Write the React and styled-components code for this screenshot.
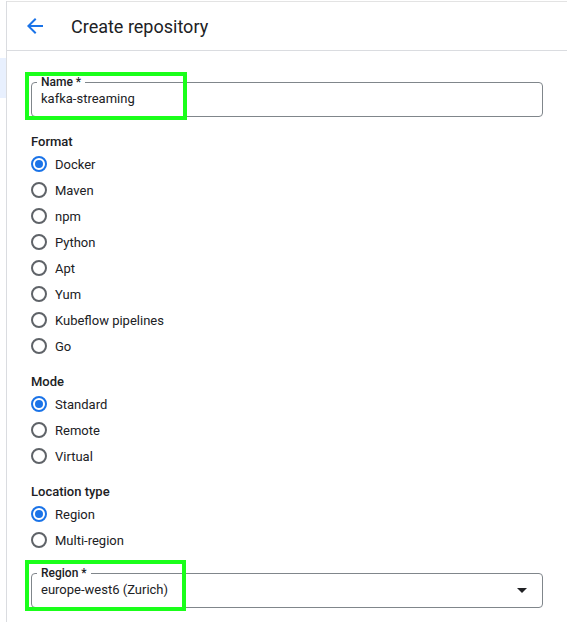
import React from "react";
import styled, { createGlobalStyle } from "styled-components";
import { MdArrowBack, MdArrowDropDown } from "react-icons/md";

const GlobalStyle = createGlobalStyle`
  html, body {
    margin: 0;
    padding: 0;
    background: #fff;
  }
  body {
    font-family: Roboto, "Liberation Sans", Arial, sans-serif;
    color: #202124;
    -webkit-font-smoothing: antialiased;
  }
`;

const sections = [
  {
    title: "Format",
    options: ["Docker", "Maven", "npm", "Python", "Apt", "Yum", "Kubeflow pipelines", "Go"],
    selected: "Docker",
  },
  {
    title: "Mode",
    options: ["Standard", "Remote", "Virtual"],
    selected: "Standard",
  },
  {
    title: "Location type",
    options: ["Region", "Multi-region"],
    selected: "Region",
  },
];

export default function App() {
  return (
    <>
      <GlobalStyle />
      <Page>
        <Sidebar>
          <SideActive />
        </Sidebar>
        <Main>
          <Header>
            <BackButton aria-label="Back">
              <MdArrowBack size={24} />
            </BackButton>
            <Title>Create repository</Title>
          </Header>

          <Content>
            <FieldWrap>
              <Field>
                <Legend>Name *</Legend>
                <Value>kafka-streaming</Value>
              </Field>
              <Highlight $top={-4} $width={162} $height={48} />
            </FieldWrap>

            {sections.map((s, i) => (
              <Section key={s.title} $first={i === 0}>
                <SectionTitle>{s.title}</SectionTitle>
                {s.options.map((opt) => (
                  <RadioRow key={opt}>
                    <Radio $checked={opt === s.selected} />
                    <RadioLabel>{opt}</RadioLabel>
                  </RadioRow>
                ))}
              </Section>
            ))}

            <FieldWrap $gap={14}>
              <Field>
                <Legend>Region *</Legend>
                <SelectRow>
                  <Value>europe-west6 (Zurich)</Value>
                  <Caret>
                    <MdArrowDropDown size={24} />
                  </Caret>
                </SelectRow>
              </Field>
              <Highlight $top={-7} $width={161} $height={51} />
            </FieldWrap>
          </Content>
        </Main>
      </Page>
    </>
  );
}

const Page = styled.div`
  display: flex;
  min-height: 622px;
  padding-top: 1px;
  box-sizing: border-box;
`;

const Sidebar = styled.aside`
  width: 6px;
  flex: none;
  border-right: 1px solid #dadce0;
`;

const SideActive = styled.div`
  margin-top: 57px;
  height: 40px;
  background: #e8f0fe;
`;

const Main = styled.main`
  flex: 1;
  display: flex;
  flex-direction: column;
`;

const Header = styled.header`
  height: 48px;
  display: flex;
  align-items: center;
  border-top: 1px solid #e3e3e3;
  border-bottom: 1px solid #dadce0;
  padding-left: 16px;
`;

const BackButton = styled.button`
  width: 24px;
  height: 24px;
  padding: 0;
  border: 0;
  background: none;
  color: #1a73e8;
  display: flex;
  align-items: center;
  justify-content: center;
  cursor: pointer;
`;

const Title = styled.h1`
  margin: 0 0 0 24px;
  font-size: 18px;
  font-weight: 400;
  color: #202124;
  letter-spacing: 0;
`;

const Content = styled.div`
  padding: 25px 24px 0 24px;
  display: flex;
  flex-direction: column;
`;

const FieldWrap = styled.div`
  position: relative;
  margin-top: ${(p) => p.$gap || 0}px;
`;

const Field = styled.fieldset`
  margin: 0;
  padding: 1px 8px 7px 5px;
  border: 1px solid #80868b;
  border-radius: 4px;
  min-width: 0;
`;

const Legend = styled.legend`
  padding: 0 4px;
  font-size: 12px;
  line-height: 12px;
  font-weight: 500;
  color: #202124;
`;

const Value = styled.div`
  padding-left: 4px;
  font-size: 13px;
  line-height: 20px;
  color: #202124;
`;

const SelectRow = styled.div`
  display: flex;
  align-items: center;
  justify-content: space-between;
`;

const Caret = styled.span`
  display: flex;
  height: 20px;
  align-items: center;
  color: #202124;
`;

const Highlight = styled.div`
  position: absolute;
  left: -6px;
  top: ${(p) => p.$top}px;
  width: ${(p) => p.$width}px;
  height: ${(p) => p.$height}px;
  border: 4px solid #1aff1a;
  box-sizing: border-box;
  pointer-events: none;
`;

const Section = styled.section`
  margin-top: ${(p) => (p.$first ? 16 : 14)}px;
  display: flex;
  flex-direction: column;
`;

const SectionTitle = styled.h2`
  margin: 0;
  font-size: 13px;
  line-height: 18px;
  font-weight: 500;
  color: #202124;
`;

const RadioRow = styled.label`
  height: 26px;
  display: flex;
  align-items: center;
  gap: 8px;
  cursor: pointer;
`;

const Radio = styled.span`
  width: 16px;
  height: 16px;
  box-sizing: border-box;
  border-radius: 50%;
  border: 2px solid ${(p) => (p.$checked ? "#1a73e8" : "#5f6368")};
  display: flex;
  align-items: center;
  justify-content: center;

  &::after {
    content: "";
    width: 8px;
    height: 8px;
    border-radius: 50%;
    background: #1a73e8;
    display: ${(p) => (p.$checked ? "block" : "none")};
  }
`;

const RadioLabel = styled.span`
  font-size: 13px;
  color: #202124;
`;
